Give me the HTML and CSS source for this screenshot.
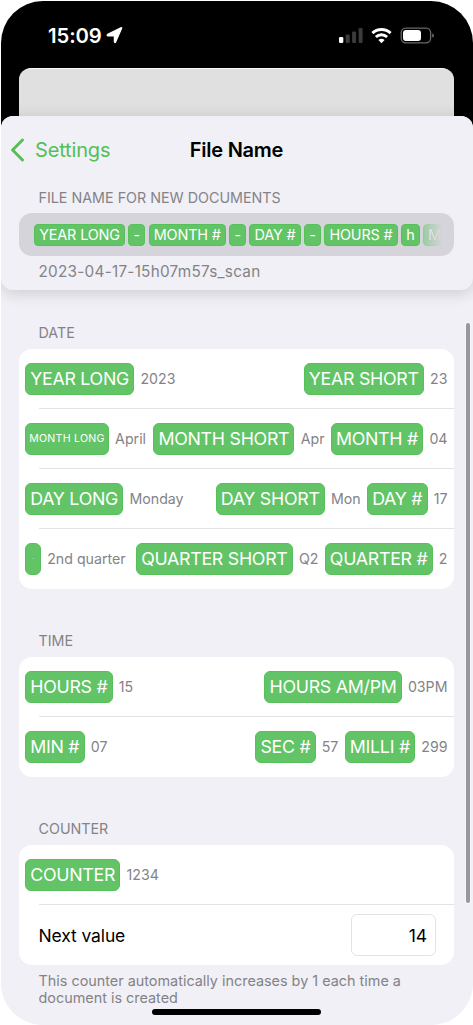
FILE: index.html
```html
<!DOCTYPE html>
<html lang="en">
<head>
<meta charset="utf-8">
<title>File Name</title>
<link rel="stylesheet" href="styles.css">
</head>
<body>
<main class="phone">
  <header class="status">
    <div class="clock">15:09
      <svg class="arrow" width="17" height="17" viewBox="0 0 17 17"><path d="M15.6 1.2 9.6 15.1Q8.8 16.2 8.4 14.7V8.9H2.1Q.4 8.6 1.7 7.4L14.9.8Q15.9.5 15.6 1.2Z" fill="#fff" stroke="#fff" stroke-width="1.3" stroke-linejoin="round"/></svg>
    </div>
    <svg class="indicators" width="98" height="20" viewBox="0 0 98 20">
      <g fill="#fff"><rect x="1" y="10" width="4.3" height="6" rx="1.3"/></g>
      <g fill="#3b3b3b"><rect x="7.7" y="7.5" width="4" height="8.5" rx="1.2"/><rect x="14.1" y="4.5" width="4" height="11.5" rx="1.2"/><rect x="20.6" y="1" width="4" height="15" rx="1.2"/></g>
      <g fill="none" stroke="#fff" stroke-width="3"><path d="M34.4 6.1a13.2 13.2 0 0 1 18.2 0"/><path d="M37.9 10a8.2 8.2 0 0 1 11.2 0"/></g>
      <path d="M40.4 13.1a4.6 4.6 0 0 1 6.2 0L43.5 16.3Z" fill="#fff"/>
      <rect x="63.2" y="1.1" width="29.4" height="14.7" rx="4.5" fill="none" stroke="#686868" stroke-width="1.3"/>
      <rect x="65" y="3" width="18" height="11" rx="3" fill="#fff"/>
      <path d="M94.3 6.2q3.4 2.3 0 4.6Z" fill="#777"/>
    </svg>
  </header>
  <div class="behind"></div>
  <section class="sheet">
    <div class="top">
      <nav class="nav">
        <a class="back"><svg width="15" height="24" viewBox="0 0 15 24"><path d="M12.5 2 2.6 12l9.9 10" fill="none" stroke="#53bf56" stroke-width="2.9" stroke-linecap="round" stroke-linejoin="round"/></svg><span>Settings</span></a>
        <h1 class="title">File Name</h1>
      </nav>
      <h2 class="label label-top">FILE NAME FOR NEW DOCUMENTS</h2>
      <div class="field">
        <span class="token">YEAR LONG</span><span class="token dash">-</span><span class="token">MONTH #</span><span class="token dash">-</span><span class="token">DAY #</span><span class="token dash">-</span><span class="token">HOURS #</span><span class="token">h</span><span class="token faded">M</span>
      </div>
      <p class="preview">2023-04-17-15h07m57s_scan</p>
    </div>
    <div class="list">
      <h2 class="label">DATE</h2>
      <div class="card">
        <div class="row"><span class="chip">YEAR LONG</span><span class="val">2023</span><span class="chip push">YEAR SHORT</span><span class="val">23</span></div>
        <div class="row"><span class="chip small">MONTH LONG</span><span class="val">April</span><span class="chip push">MONTH SHORT</span><span class="val">Apr</span><span class="chip">MONTH #</span><span class="val">04</span></div>
        <div class="row"><span class="chip">DAY LONG</span><span class="val">Monday</span><span class="chip push">DAY SHORT</span><span class="val">Mon</span><span class="chip">DAY #</span><span class="val">17</span></div>
        <div class="row"><span class="chip tiny">-</span><span class="val">2nd quarter</span><span class="chip push">QUARTER SHORT</span><span class="val">Q2</span><span class="chip">QUARTER #</span><span class="val">2</span></div>
      </div>
      <h2 class="label">TIME</h2>
      <div class="card">
        <div class="row"><span class="chip">HOURS #</span><span class="val">15</span><span class="chip push">HOURS AM/PM</span><span class="val">03PM</span></div>
        <div class="row"><span class="chip">MIN #</span><span class="val">07</span><span class="chip push">SEC #</span><span class="val">57</span><span class="chip">MILLI #</span><span class="val">299</span></div>
      </div>
      <h2 class="label">COUNTER</h2>
      <div class="card">
        <div class="row"><span class="chip">COUNTER</span><span class="val">1234</span></div>
        <div class="row next"><span>Next value</span><span class="input push">14</span></div>
      </div>
      <p class="note">This counter automatically increases by 1 each time a document is created</p>
    </div>
    <div class="scrollbar"></div>
  </section>
  <div class="home"></div>
</main>
</body>
</html>
```
FILE: styles.css
```css
* { box-sizing: border-box; }
body { margin: 0; padding: 1px 0 0 1px; background: #fff; font-family: Inter, sans-serif; overflow: hidden; }
.phone { position: relative; display: flex; flex-direction: column; width: 472px; height: 1024px; background: linear-gradient(#000 200px, #f1f0f6 200px); border-radius: 42px; overflow: hidden; }
.status { display: flex; justify-content: space-between; align-items: flex-start; height: 67px; flex: none; padding: 21px 37px 0 47px; }
.clock { display: flex; align-items: center; gap: 4px; height: 26px; color: #fff; font-size: 20.3px; font-weight: 600; letter-spacing: -0.1px; }
.indicators { margin-top: 5px; }
.behind { flex: none; height: 48px; margin: 0 19px 0 18px; background: #e0e0e0; border-top: 1px solid #f8f8f8; border-radius: 12px 12px 0 0; }
.sheet { position: relative; flex: 1; background: #f1f0f6; border-radius: 12px 12px 0 0; }
.top { height: 174px; background: #f1f0f6; border-radius: 12px; box-shadow: 0 3px 16px rgba(0,0,0,.16); }
.nav { display: grid; grid-template-columns: 1fr auto 1fr; align-items: center; height: 68px; padding: 0 10px 0 9px; }
.back { display: flex; align-items: center; gap: 10px; color: #53bf56; font-size: 20px; letter-spacing: -0.15px; }
.title { margin: 0; font-size: 20px; font-weight: 600; letter-spacing: -0.25px; color: #000; }
.label { margin: 0; padding-left: 37.5px; font-size: 14.3px; line-height: 18px; font-weight: 400; letter-spacing: 0; color: #838387; }
.label-top { height: 29px; padding-top: 5px; }
.field { display: flex; align-items: center; gap: 3.3px; height: 43px; margin: 0 19px 0 18px; padding-left: 15px; border-radius: 13px; background: #d5d4da; overflow: hidden; }
.token { flex: none; height: 22px; padding: 0 4.2px; border: 1px solid #56c059; border-radius: 4px; background: #62c466; color: #fff; font-size: 14.4px; line-height: 20px; letter-spacing: -0.14px; }
.faded { width: 20px; overflow: hidden; -webkit-mask-image: linear-gradient(90deg, rgba(0,0,0,.5), transparent 95%); mask-image: linear-gradient(90deg, rgba(0,0,0,.5), transparent 95%); }
.preview { margin: 0; padding: 6px 0 0 37.5px; font-size: 15.3px; line-height: 20px; letter-spacing: .26px; color: #838387; }
.list { padding: 34px 19px 0 18px; }
.list .label { padding-left: 19.5px; }
.card { margin: 7px 0 43px; border-radius: 13px; background: #fff; overflow: hidden; }
.row { display: flex; align-items: center; gap: 6.2px; height: 60px; padding: 0 6.5px 0 6px; background: linear-gradient(#e3e3e5, #e3e3e5) 19.5px 100% / 100% 1.4px no-repeat; }
.row:last-child { background: none; }
.push { margin-left: auto; }
.chip { flex: none; height: 31.4px; padding: 0 4.2px; border: 1px solid #56c059; border-radius: 6px; background: #62c466; color: #fff; font-size: 17.8px; line-height: 29.4px; letter-spacing: -0.27px; }
.small { font-size: 10.6px; letter-spacing: .25px; padding: 0 3.2px; }
.tiny { width: 16px; padding: 0; text-align: center; font-size: 4px; }
.val { color: #838387; font-size: 14.2px; line-height: 18px; white-space: nowrap; }
.row.next { padding: 0 18px 0 19.5px; font-size: 17.5px; letter-spacing: -0.12px; color: #000; }
.input { display: flex; align-items: center; justify-content: flex-end; width: 85px; height: 42px; padding-right: 8px; border: 1px solid #e3e3e5; border-radius: 6px; }
.note { margin: -35px 30px 0 19.5px; font-size: 14.4px; line-height: 16.8px; color: #838387; }
.scrollbar { position: absolute; top: 207px; right: 3px; width: 4px; height: 580px; border-radius: 2px; background: #98979c; box-shadow: 0 0 0 1px #f8f8fa; }
.home { position: absolute; left: 151px; bottom: 10px; width: 169px; height: 6px; border-radius: 3px; background: #000; }
```
